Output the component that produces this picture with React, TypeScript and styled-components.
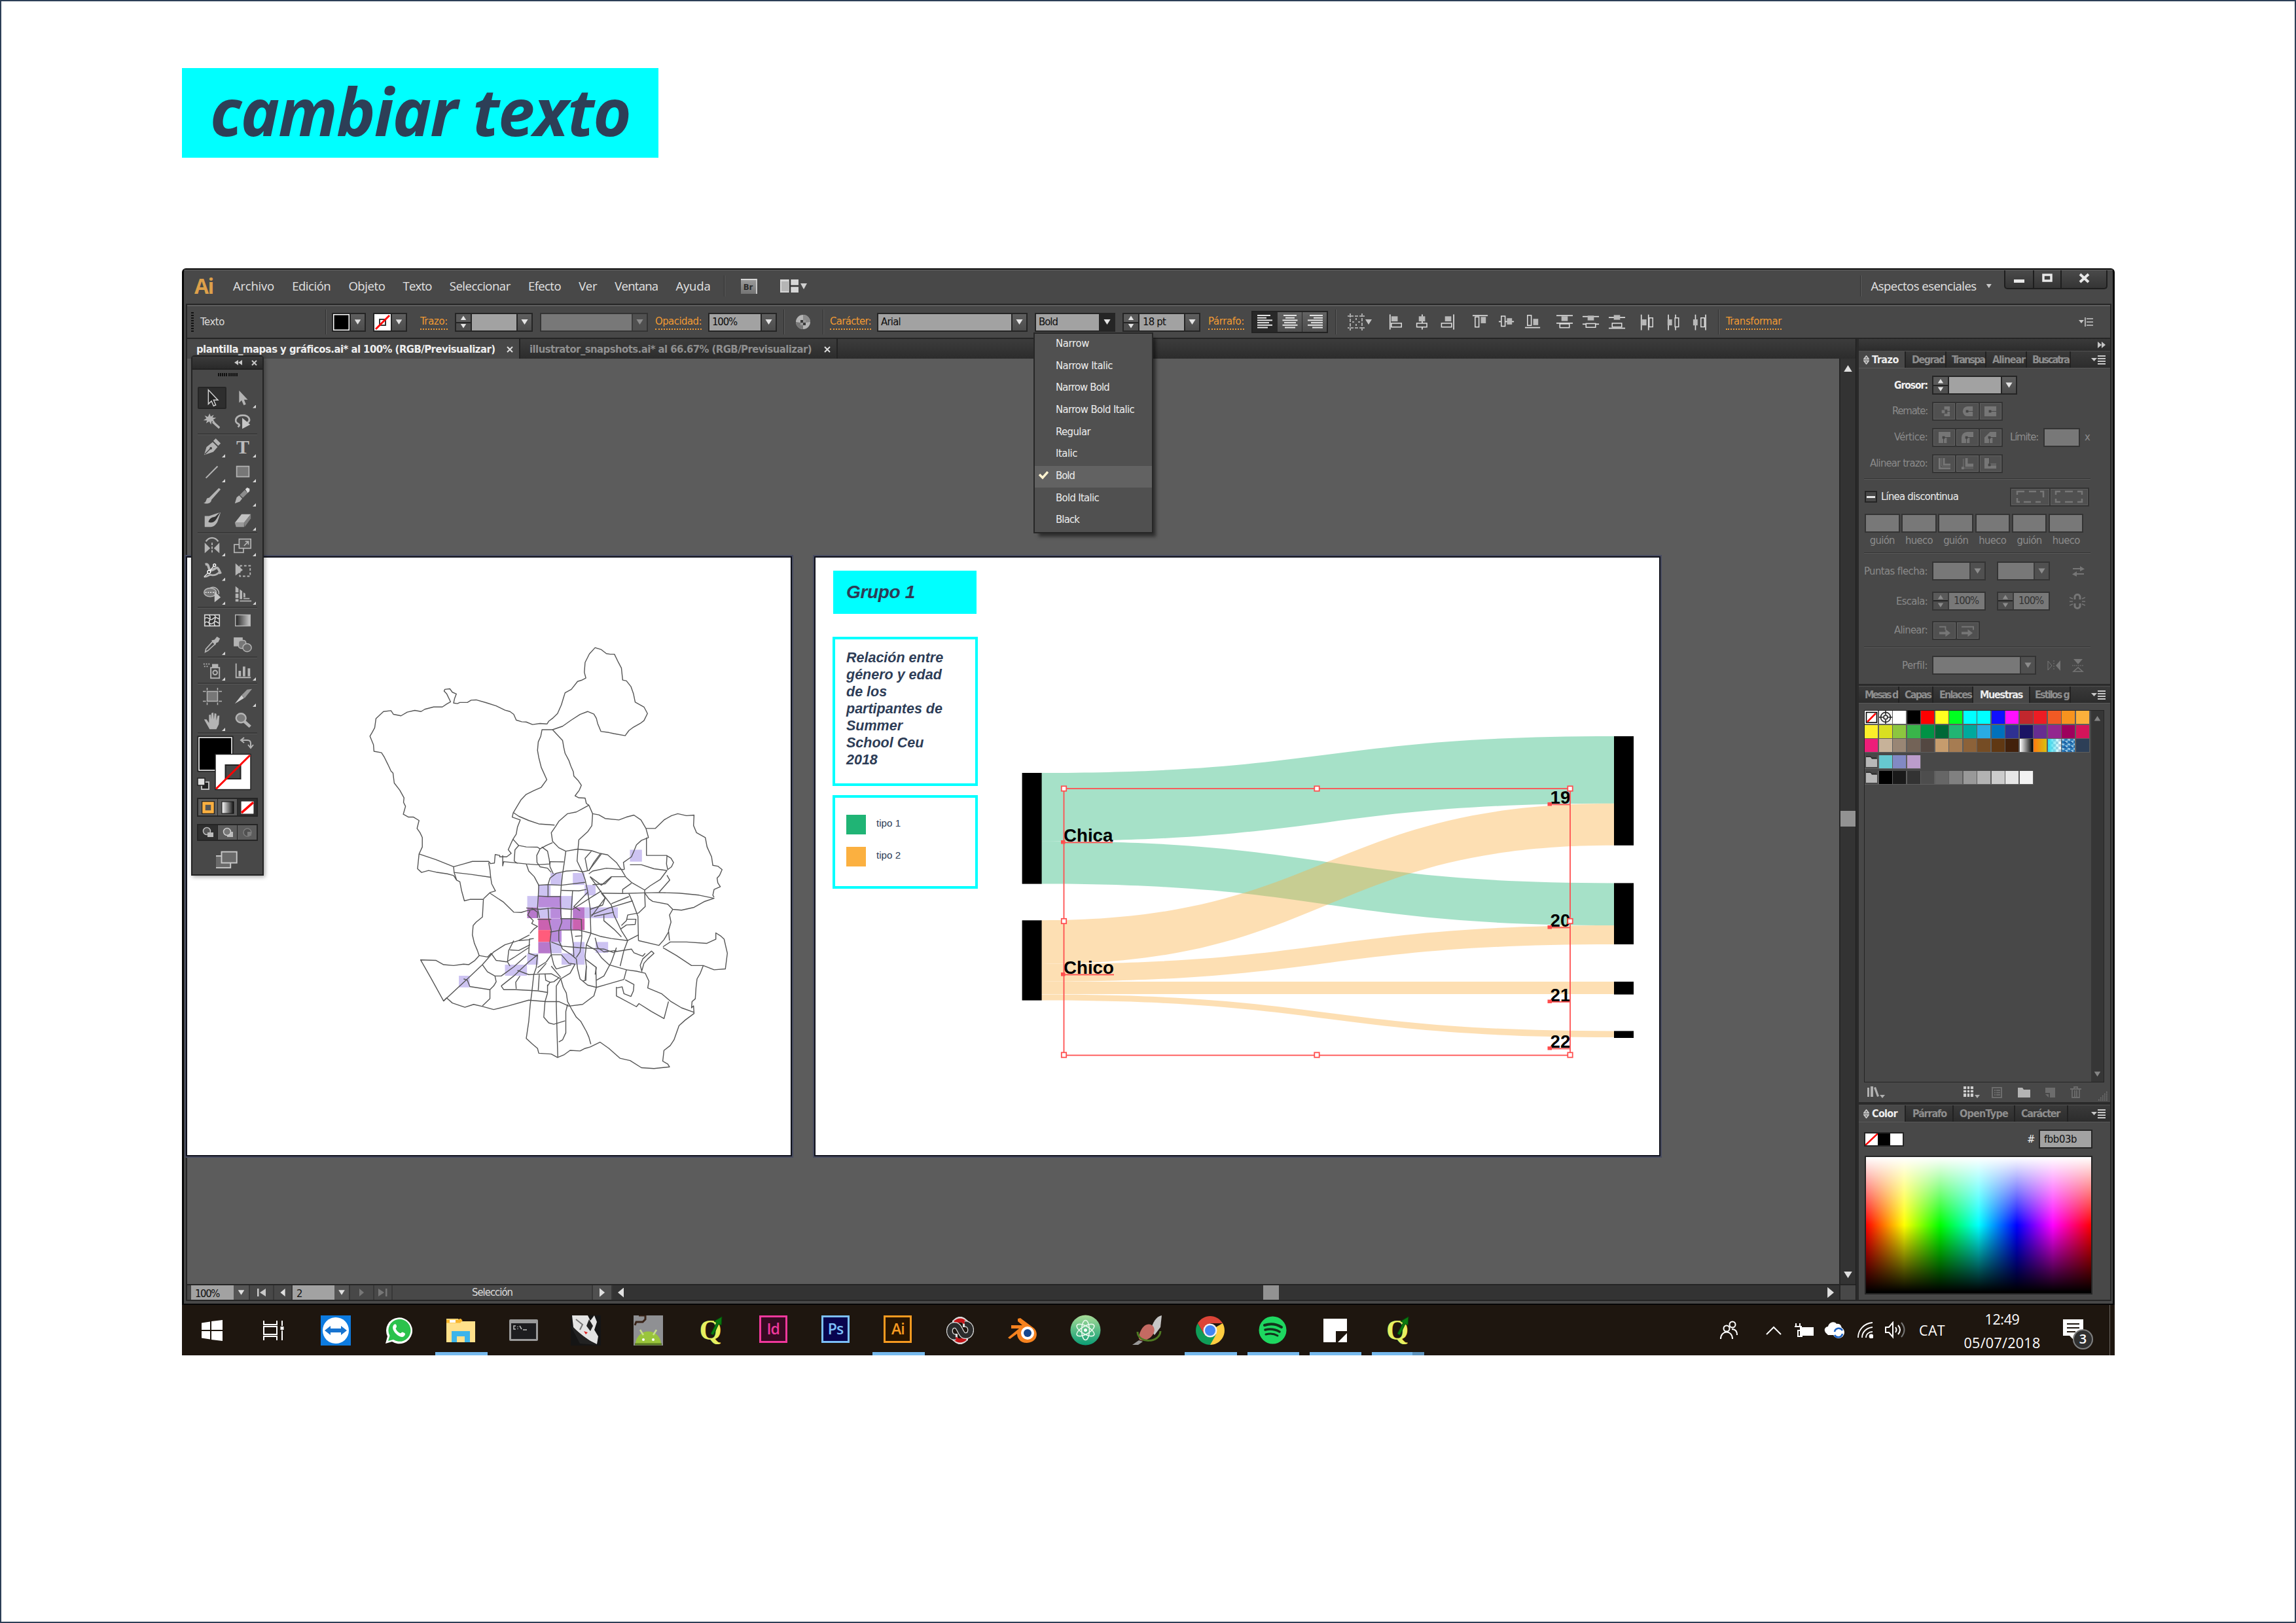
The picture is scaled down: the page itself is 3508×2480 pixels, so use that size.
import React, { useLayoutEffect, useRef, useState } from "react";
import styled, { createGlobalStyle, css } from "styled-components";

const TAHOMA = `"DejaVu Sans Condensed", "DejaVu Sans", sans-serif`;
const SEGOE = `"Open Sans", "Noto Sans", sans-serif`;
const ARIAL = `"Liberation Sans", Arial, sans-serif`;
const NAVY = "#2d3f57";
const CYAN = "#00ffff";
const PANEL = "#484848";
const EDGE = "#252525";
const ORANGE = "#f09a33";

const Global = createGlobalStyle`
  * { box-sizing: border-box; }
  body { margin: 0; background: #fff; }
  svg { display: block; flex: none; }
`;

/* ---------- text that spreads its letters over a given width ---------- */
const FitBox = styled.span<{ $w: number }>`
  display: inline-block;
  flex: none;
  width: ${(p) => p.$w}px;
  white-space: pre;
`;
const Fit = ({ w, children }: { w: number; children: string }) => {
  const ref = useRef<HTMLSpanElement>(null);
  const [spacing, setSpacing] = useState(0);
  useLayoutEffect(() => {
    if (ref.current) setSpacing((w - ref.current.getBoundingClientRect().width) / children.length);
  }, [w, children]);
  return (
    <FitBox $w={w}>
      <span ref={ref} style={{ letterSpacing: spacing }}>{children}</span>
    </FitBox>
  );
};

/* ---------- page ---------- */
const Page = styled.main`
  width: 3508px;
  height: 2480px;
  border: 2px solid ${NAVY};
  padding: 102px 276px;
  background: #fff;
  overflow: hidden;
`;
const Title = styled.h1`
  margin: 0 0 169px;
  width: 728px;
  height: 137px;
  padding-left: 43px;
  background: ${CYAN};
  color: ${NAVY};
  font: italic 700 100px/131px "Noto Sans", "Open Sans", sans-serif;
`;
const Desktop = styled.section`
  width: 2953px;
  height: 1661px;
  display: flex;
  flex-direction: column;
`;
const AppWindow = styled.div`
  height: 1584px;
  display: flex;
  flex-direction: column;
  border: solid #060606;
  border-width: 2px 3px 2px 3px;
  border-radius: 6px 6px 0 0;
  background: ${PANEL};
  color: #dcdcdc;
  font: 16.5px/20px ${TAHOMA};
`;

/* ---------- menu bar ---------- */
const MenuBar = styled.header`
  height: 52px;
  flex: none;
  display: flex;
  align-items: center;
  padding: 0 0 3px 16px;
  border-top: 1px solid #6c6c6c;
  font: 18.5px/24px ${SEGOE};
  color: #e2e2e2;
`;
const AiMark = styled.span`
  width: 59px;
  font: 700 32px/40px ${SEGOE};
  color: #dda04a;
  letter-spacing: -1.5px;
`;
const Menus = styled.nav`
  display: flex;
  gap: 27.2px;
`;
const Rule = styled.i<{ $h: number; $ml: number }>`
  flex: none;
  width: 2px;
  height: ${(p) => p.$h}px;
  margin-left: ${(p) => p.$ml}px;
  border-left: 1px solid #303030;
  border-right: 1px solid #5c5c5c;
`;
const BridgeBtn = styled.span`
  margin: 0 35px 0 24px;
  width: 25px;
  height: 23px;
  background: linear-gradient(#9a9a9a, #747474);
  border-top: 2px solid #d8d8d8;
  border-right: 2px solid #c8c8c8;
  font: 700 13px/21px ${TAHOMA};
  text-align: center;
  color: #2c2c2c;
`;
const Workspace = styled.div`
  margin-left: auto;
  display: flex;
  align-items: center;
  gap: 15px;
`;
const WinButtons = styled.div`
  align-self: flex-start;
  display: flex;
  width: 158px;
  height: 29px;
  margin: 0 8px 0 19px;
  background: linear-gradient(#4a4a4a, #353535);
  border: 2px solid #1e1e1e;
  border-top: 0;
  border-radius: 0 0 5px 5px;
`;
const WinButton = styled.span<{ $w: number }>`
  width: ${(p) => p.$w}px;
  display: flex;
  justify-content: center;
  padding-top: 3px;
  & + & { border-left: 2px solid #1e1e1e; }
`;

/* ---------- frame & control bar ---------- */
const Frame = styled.div`
  flex: 1;
  min-height: 0;
  margin: 0 2px 4px 3px;
  border: 2px solid ${EDGE};
  display: flex;
  flex-direction: column;
`;
const ControlBar = styled.div`
  position: relative;
  z-index: 3;
  height: 52px;
  flex: none;
  display: flex;
  align-items: center;
  border-top: 2px solid #5e5e5e;
  border-bottom: 2px solid ${EDGE};
`;
const Slot = styled.div<{ $ml: number; $w: number }>`
  flex: none;
  position: relative;
  margin-left: ${(p) => p.$ml}px;
  width: ${(p) => p.$w}px;
  display: flex;
`;
const LinkLabel = styled.span`
  color: ${ORANGE};
  height: 23px;
  line-height: 20px;
  border-bottom: 2px dotted ${ORANGE};
`;
const BarGrip = styled.i`
  width: 4px;
  height: 31px;
  background: repeating-linear-gradient(#111 0 2px, ${PANEL} 2px 4px);
`;
const ComboBox = styled.div<{ $w: number; $off?: boolean }>`
  position: relative;
  flex: none;
  display: flex;
  width: ${(p) => p.$w}px;
  height: 29px;
  border: 2px solid ${(p) => (p.$off ? "#343434" : EDGE)};
  background: ${(p) => (p.$off ? "#787878" : "#a2a2a2")};
  color: ${(p) => (p.$off ? "#333" : "#0c0c0c")};
`;
const ComboValue = styled.span<{ $pad?: number }>`
  flex: 1;
  padding-left: ${(p) => p.$pad ?? 4}px;
  line-height: 24px;
  white-space: nowrap;
`;
const ComboArrow = styled.span<{ $dark?: boolean; $off?: boolean }>`
  width: 23px;
  display: flex;
  align-items: center;
  justify-content: center;
  border-left: 2px solid ${(p) => (p.$off ? "#3c3c3c" : EDGE)};
  background: ${(p) => (p.$dark ? "#252525" : p.$off ? "#505050" : "linear-gradient(#5e5e5e,#4c4c4c)")};
`;
const StepBox = styled.span<{ $off?: boolean }>`
  width: 24px;
  display: flex;
  flex-direction: column;
  align-items: center;
  justify-content: space-around;
  border-right: 2px solid ${(p) => (p.$off ? "#3c3c3c" : EDGE)};
  background: linear-gradient(#5a5a5a 11.5px, ${EDGE} 11.5px 13.5px, #4e4e4e 13.5px);
`;
const Tri = styled.i<{ $dir?: "up" | "down" | "left" | "right"; $s?: number; $c?: string }>`
  flex: none;
  width: ${(p) => (p.$dir === "left" || p.$dir === "right" ? 0.9 : 1.2) * (p.$s ?? 8)}px;
  height: ${(p) => (p.$dir === "left" || p.$dir === "right" ? 1.5 : 0.95) * (p.$s ?? 8)}px;
  background: ${(p) => p.$c ?? "#e0e0e0"};
  clip-path: ${(p) =>
    ({
      up: "polygon(50% 0,100% 100%,0 100%)",
      down: "polygon(0 0,100% 0,50% 100%)",
      left: "polygon(100% 0,100% 100%,0 50%)",
      right: "polygon(0 0,100% 50%,0 100%)",
    })[p.$dir ?? "down"]};
`;

type ComboProps = { w: number; value?: string; tw?: number; step?: boolean; arrow?: boolean; dark?: boolean; off?: boolean; pad?: number; children?: React.ReactNode };
const Combo = ({ w, value, tw = 0, step, arrow = true, dark, off, pad, children }: ComboProps) => {
  const tint = off ? "#8c8c8c" : "#e4e4e4";
  return (
    <ComboBox $w={w} $off={off}>
      {step && (
        <StepBox $off={off}>
          <Tri $dir="up" $s={7} $c={tint} />
          <Tri $s={7} $c={tint} />
        </StepBox>
      )}
      <ComboValue $pad={pad}>{value && <Fit w={tw}>{value}</Fit>}</ComboValue>
      {arrow && (
        <ComboArrow $dark={dark} $off={off}>
          <Tri $s={8.5} $c={tint} />
        </ComboArrow>
      )}
      {children}
    </ComboBox>
  );
};

const DropMenu = styled.ul`
  position: absolute;
  left: -4px;
  top: 28px;
  width: 183px;
  margin: 0;
  padding: 0;
  list-style: none;
  background: #505050;
  border: 2px solid #272727;
  box-shadow: 6px 7px 5px -2px rgba(0, 0, 0, 0.5);
  color: #ededed;
`;
const DropItem = styled.li<{ $on?: boolean }>`
  height: 33.7px;
  display: flex;
  align-items: center;
  padding: 0 0 3px ${(p) => (p.$on ? 6 : 32)}px;
  gap: 11px;
  background: ${(p) => (p.$on ? "#626262" : "transparent")};
`;
const STYLES: [string, number][] = [
  ["Narrow", 51], ["Narrow Italic", 87], ["Narrow Bold", 82], ["Narrow Bold Italic", 120], ["Regular", 53],
  ["Italic", 33], ["Bold", 29], ["Bold Italic", 66], ["Black", 36],
];

const ParaGroup = styled.div`
  display: flex;
  width: 117px;
  height: 34px;
  border: 2px solid #222;
`;
const ParaButton = styled.span<{ $on?: boolean }>`
  flex: 1;
  display: flex;
  align-items: center;
  justify-content: center;
  background: ${(p) => (p.$on ? "#282828" : "linear-gradient(#636363,#4d4d4d)")};
  & + & { border-left: 1px solid #2a2a2a; }
`;
const ParaLines = ({ at }: { at: number }) => (
  <svg width="24" height="24" viewBox="0 0 24 24">
    {[20, 14, 23, 18, 23, 16].map((w, i) => (
      <rect key={i} x={(24 - w) * at} y={1 + i * 3.7} width={w} height="2" fill="#e4e4e4" />
    ))}
  </svg>
);

/* alignment & distribution glyphs: two bars against one or two guide lines */
const AlignGlyph = ({ kind, pos }: { kind: "h" | "v" | "dh" | "dv"; pos: 0 | 1 | 2 }) => {
  const solid = "#b8b8b8";
  const line = "#dcdcdc";
  const off = pos / 2;
  const body =
    kind === "h" || kind === "v" ? (
      <>
        <rect x={1 + 19 * off} y="0" width="1.8" height="24" fill={line} />
        <rect x={4 + 4 * off - (pos === 2 ? 1 : 0)} y="3" width="10" height="8" fill={solid} />
        <rect x={4 - 2.5 * off} y="14" width="16" height="6" fill={PANEL} stroke={line} strokeWidth="1.6" />
      </>
    ) : (
      <>
        <rect x="0" y={1 + off * 3} width="26" height="1.8" fill={line} />
        <rect x="8" y={3 - off * 2} width="10" height="7.5" fill={solid} />
        <rect x="0" y={13 + off * 3 + (pos === 2 ? 5 : 0)} width="26" height="1.8" fill={line} />
        <rect x="5.5" y={15 - off} width="15" height="6" fill={PANEL} stroke={line} strokeWidth="1.6" />
      </>
    );
  return (
    <svg width={27} height="26" viewBox="-1 -1 28 26">
      {kind === "v" ? <g transform="matrix(0 1 1 0 0 0)"><g transform="translate(0 24) scale(1 -1)">{body}</g></g>
        : kind === "dh" ? <g transform="translate(0 25) rotate(-90) scale(.95)">{body}</g> : body}
    </svg>
  );
};

/* ---------- document area ---------- */
const Main = styled.div`
  flex: 1;
  min-height: 0;
  display: flex;
  background: #2a2a2a;
`;
const DocColumn = styled.div`
  width: 2550px;
  flex: none;
  display: flex;
  flex-direction: column;
  border-right: 1px solid #1d1d1d;
`;
const TabBar = styled.div`
  height: 30px;
  flex: none;
  display: flex;
  background: linear-gradient(#3c3c3c, #2c2c2c);
`;
const DocTab = styled.div<{ $w: number; $on?: boolean }>`
  width: ${(p) => p.$w}px;
  display: flex;
  align-items: center;
  justify-content: space-between;
  padding: 1px 9px 0 14px;
  font-weight: 700;
  background: ${(p) => (p.$on ? PANEL : "transparent")};
  color: ${(p) => (p.$on ? "#eee" : "#8f8f8f")};
  border-right: 2px solid #232323;
`;
const Middle = styled.div`
  flex: 1;
  min-height: 0;
  display: flex;
`;
const Canvas = styled.div`
  position: relative;
  flex: 1;
  background: #5c5c5c;
`;
const Artboard = styled.div<{ $x: number; $w: number }>`
  position: absolute;
  left: ${(p) => p.$x}px;
  top: 302px;
  width: ${(p) => p.$w}px;
  height: 917px;
  background: #fff;
  border: 2px solid #10121c;
  outline: 2px solid #484c60;
`;
const VScroll = styled.div`
  position: relative;
  width: 25px;
  display: flex;
  flex-direction: column;
  align-items: center;
  justify-content: space-between;
  padding: 10px 0 9px;
  background: #333;
  border-left: 2px solid #262626;
`;
const VThumb = styled.i`
  width: 23px;
  height: 24px;
  margin-top: -10px;
  background: #929292;
`;

const Legend = styled.aside`
  position: absolute;
  left: 26px;
  top: 20px;
  width: 222px;
  color: #2d3c56;
  font-family: ${ARIAL};
`;
const GroupTag = styled.div`
  width: 219px;
  height: 66px;
  margin-left: 1px;
  padding-left: 20px;
  background: ${CYAN};
  font: italic 700 28px/65px ${ARIAL};
`;
const Outlined = styled.div<{ $h: number; $mt: number; $pt: number }>`
  height: ${(p) => p.$h}px;
  margin-top: ${(p) => p.$mt}px;
  padding: ${(p) => p.$pt}px 0 0 17px;
  border: 4px solid ${CYAN};
  font: italic 700 21.5px/26px ${ARIAL};
`;
const KeyRow = styled.div`
  display: flex;
  align-items: center;
  gap: 16px;
  height: 30px;
  margin-bottom: 19px;
  font: 15.2px/20px ${ARIAL};
  span { margin-top: -4px; }
`;
const KeyChip = styled.i<{ $c: string }>`
  width: 30px;
  height: 30px;
  background: ${(p) => p.$c};
`;
const Diagram = styled.svg`
  position: absolute;
  left: 296px;
  top: 250px;
`;

const ribbon = (a: number, b: number, c: number, d: number) =>
  `M1591 ${a}C2028 ${a} 2028 ${c} 2466 ${c}V${d}C2028 ${d} 2028 ${b} 1591 ${b}Z`;
const GREEN_FLOWS = [ribbon(1180, 1284.2, 1124, 1226.7), ribbon(1284.2, 1349.6, 1348.4, 1413)];
const ORANGE_FLOWS = [
  ribbon(1405.3, 1472, 1226.7, 1290.8), ribbon(1472, 1498.9, 1413, 1442),
  ribbon(1499, 1518, 1499, 1518), ribbon(1518.5, 1527.6, 1574.4, 1584),
];
const NODES = [
  [1561.6, 1180, 169.6], [1561.6, 1405.3, 122.3], [2466, 1124, 166.8],
  [2466, 1348.4, 93.6], [2466, 1499, 19.6], [2466, 1574.4, 10.6],
];
const LABELS: [string, number, number, number][] = [
  ["Chica", 1625, 1285, 75], ["Chico", 1625, 1487, 77], ["19", 2368.5, 1227, 30],
  ["20", 2368.5, 1415, 30], ["21", 2368.5, 1528.5, 30], ["22", 2368.5, 1600, 30],
];

const Sankey = () => (
  <Diagram width="960" height="520" viewBox="1542 1101 960 520">
    {GREEN_FLOWS.map((d) => <path key={d} d={d} fill="#20b475" fillOpacity=".4" />)}
    {ORANGE_FLOWS.map((d) => <path key={d} d={d} fill="#fbb040" fillOpacity=".4" />)}
    {NODES.map(([x, y, h]) => <rect key={x + "-" + y} x={x} y={y} width="30" height={h} fill="#000" />)}
    {LABELS.map(([t, x, y, w]) => (
      <g key={t}>
        <text x={x} y={y} fontFamily={ARIAL} fontWeight="700" fontSize="27.7" fill="#000">{t}</text>
        <rect x={x} y={y + 0.5} width={w} height="1.8" fill="#ff4d4d" />
        <rect x={x - 4} y={y - 2} width="6.5" height="5.5" fill="#ff4d4d" />
      </g>
    ))}
    <g stroke="#ff5050" strokeWidth="1.8" fill="none">
      <rect x="1625.5" y="1204" width="773.5" height="407.5" />
      {[[1625.5, 1204], [2012, 1204], [2399, 1204], [1625.5, 1406.5], [2399, 1406.5], [1625.5, 1611], [2012, 1611], [2399, 1611]].map(([x, y]) => (
        <rect key={x + "-" + y} x={x - 3.7} y={y - 3.7} width="7.4" height="7.4" fill="#fff" />
      ))}
    </g>
  </Diagram>
);

/* ---------- district map ---------- */
const MapSvg = styled.svg`
  position: absolute;
  left: 254px;
  top: 423px;
`;
const LILAC = "#cdc3f2", PURPLE = "#b98bdb", PINK = "#ca62b0";
const HEAT: [number, number, number, number, string][] = [
  [1104, 755, 48, 42, LILAC], [787, 837, 44, 42, LILAC], [876, 837, 47, 42, LILAC], [738, 879, 49, 39, LILAC],
  [923, 879, 44, 37, LILAC], [694, 918, 44, 40, LILAC], [738, 918, 93, 40, PURPLE], [831, 918, 45, 44, LILAC],
  [694, 958, 44, 38, "#b778cb"], [738, 958, 49, 38, LILAC], [787, 958, 44, 38, PURPLE], [876, 958, 47, 39, "#b778cb"],
  [923, 958, 133, 38, LILAC], [738, 997, 49, 41, PINK], [787, 997, 89, 41, PURPLE], [876, 997, 47, 41, PINK],
  [738, 1038, 49, 42, "#ff5c7c"], [787, 1038, 44, 42, PURPLE], [738, 1080, 49, 40, "#b778cb"], [787, 1080, 44, 40, LILAC],
  [876, 1080, 47, 80, LILAC], [831, 1120, 45, 40, LILAC], [967, 1080, 50, 38, LILAC], [694, 1120, 44, 40, LILAC],
  [605, 1160, 88, 39, LILAC], [421, 1199, 43, 41, LILAC],
];
const BORDERS = [
  "773,312 745,310 715,314 690,305 672,304 650,298 640,278 625,268 605,263 570,248 530,237 490,227 470,228 455,236 425,236 415,240 400,238 404,222 411,206 395,200 385,188 365,190 362,196 372,205 388,234 372,242 355,252 320,252 285,260 270,268 245,264 215,270 190,283 160,278 150,265 120,268 90,293 85,325 76,340 66,355 80,385 82,408 112,413 124,430 138,455 150,478 158,485 163,520 185,545 202,572 200,588 208,602 199,630 220,640 240,640 262,652 254,680 266,695 275,712 275,745 262,770 256,822 272,835 300,828 330,834 375,840 400,846 412,862",
  "262,770 330,790 400,815 440,805 475,796 540,796 548,804 563,802 566,772 584,775 584,780 612,780 630,768 618,755 628,735 637,718 650,700 655,675 666,650 634,640 638,625 655,600 670,578 690,560 720,547 750,535 772,508 750,465 740,430 735,405 738,375 748,355 753,332 795,332 835,320 870,298 905,278 935,268 960,277 970,292 975,310 988,338 1020,342 1040,346 1085,353 1100,335 1115,325 1145,310 1160,300 1174,275 1160,252 1125,235 1118,205 1108,180 1090,160 1075,157 1070,115 1058,95 1042,66 1025,66 1010,64 990,50 965,43 942,65 925,95 922,130 928,150 910,158 895,162 870,190 845,202 838,222 830,245 815,275 795,292 780,302 773,312",
  "795,332 835,370 840,395 845,415 860,440 868,460 878,480 880,495 898,512 910,528 902,545 885,565 900,572 925,573 930,592 940,598 955,628 952,670 935,692 900,720 895,770 893,795 915,835 925,860 935,900 945,960 948,1050 930,1090 925,1130 930,1165 925,1215",
  "940,598 915,610 890,622 855,628 820,655 808,672 790,695 795,725 820,748 848,760 842,800 835,840 830,880 826,930 828,980 832,1010",
  "640,625 660,637 700,652 740,664 803,668", "637,718 660,740 690,745 735,746 745,752 770,740 795,730",
  "660,740 645,755 642,795 655,803", "745,752 732,775 733,800 745,815 775,820 790,835", "752,745 775,760 782,790 785,815 798,840",
  "955,628 980,632 1005,645 1060,650 1090,640 1120,633 1148,650 1168,680 1178,712 1150,722 1130,738 1120,760 1110,780 1078,800 1082,825",
  "1168,680 1205,680 1240,650 1270,635 1295,628 1330,635 1360,633 1358,670 1370,695 1405,712 1412,745 1430,780 1435,810 1455,813 1472,825 1462,845 1452,855 1455,872 1465,885 1440,895 1435,915 1440,922",
  "1170,712 1170,775 1250,775 1268,785 1278,800 1270,815 1255,825 1250,805 1252,775",
  "1104,808 1150,808 1200,822 1252,828 1225,860 1185,882 1163,897", "1252,845 1263,862 1240,885 1220,905",
  "848,760 895,753 950,758 985,768 1015,773 1050,800 1072,828 1088,852 1110,870 1163,897 1163,907 1180,928 1195,937 1255,947 1275,965 1310,968 1360,958 1400,938 1440,926 1380,915 1300,908 1220,906 1160,907 1075,909 990,908",
  "400,815 402,835 470,842 548,852 545,825 540,800", "402,835 412,862 425,868 432,900 443,935 465,930 519,930 515,992 490,1010 478,1022 475,1055 483,1085 495,1110 502,1128 485,1145 460,1160 440,1158 400,1163 360,1160 330,1145 268,1143 310,1208 360,1288 455,1210 515,1160 560,1115 605,1090 660,1075 703,1055",
  "548,852 552,875 567,900 545,906 519,928", "545,908 600,940 640,975 670,976 692,970 720,965",
  "596,775 596,812 600,797 690,805 735,808 785,805 785,797 840,798", "690,805 700,830 722,850 740,880 738,920",
  "502,1128 536,1133 550,1120 570,1145 612,1150 640,1135 700,1100", "360,1288 372,1277 395,1295 445,1310 480,1300 515,1307 560,1318 620,1305 700,1285 770,1290 820,1290 860,1306 915,1300 960,1270 970,1240 968,1170",
  "515,1160 535,1185 565,1200 570,1220 560,1235 545,1248 545,1280 515,1305", "440,1210 455,1215 465,1237 545,1248",
  "565,1200 590,1200 640,1168 690,1128", "590,1235 640,1200 700,1150 735,1125", "655,1180 700,1195 745,1193 790,1192 828,1210",
  "590,1235 600,1248 650,1248 735,1252 775,1258", "650,1245 648,1222 665,1200", "735,1125 730,1170 720,1195 712,1260 706,1300 700,1360 690,1420 715,1440 735,1455 740,1472 790,1475 815,1487 840,1478 865,1462 905,1464 925,1455 945,1450 985,1433 1020,1455 1065,1490 1105,1498 1150,1523 1200,1526 1262,1520 1255,1510 1235,1500 1240,1462 1265,1445 1280,1425 1300,1375 1325,1355 1360,1332 1358,1305 1350,1312 1352,1290 1365,1280 1368,1240 1372,1210 1385,1190 1397,1163",
  "828,1210 810,1235 810,1300 813,1400 816,1487", "828,1210 838,1240 850,1260 855,1290 870,1315 890,1345 908,1360 930,1395 940,1415 948,1440",
  "775,1230 775,1260 765,1290 760,1345 780,1365 800,1370 845,1358", "855,1300 848,1325 848,1400 835,1425 820,1432", "742,1195 738,1250",
  "765,1192 768,1215 785,1222 800,1220 822,1205", "785,1222 775,1235", "1236,1097 1265,1080 1330,1080 1410,1085 1447,1070 1447,1048 1465,1058 1480,1070 1493,1120 1485,1175 1440,1178 1397,1163 1350,1163 1290,1128 1236,1100",
  "1275,965 1262,985 1268,1010 1258,1040 1262,1075", "1138,1075 1136,990 1115,940 1100,910", "1138,1075 1220,1092 1240,1072 1258,1045",
  "1163,907 1165,955 1138,978 1095,985 1090,1005 1070,1022", "1066,1035 1090,1020 1125,1018 1128,1000 1090,1000",
  "1050,1238 1050,1270 1130,1308 1140,1297 1190,1325 1240,1350 1258,1290", "1052,1242 1073,1238 1080,1262 1108,1272 1118,1252 1120,1230 1085,1213",
  "970,1240 1010,1230 1080,1212 1090,1178 1130,1183 1165,1190 1180,1218 1175,1242 1230,1262 1268,1290 1310,1312 1360,1328",
  "1152,1185 1145,1162 1155,1140 1190,1112 1200,1120 1175,1140 1160,1155 1152,1180",
  "737,880 777,878 777,920 738,918 735,960 743,995", "777,878 785,855 810,838 850,830 890,828 915,833 940,828 965,800 990,770", "775,920 826,920", "777,960 780,1000 790,1040 785,1080 790,1125",
  "690,960 745,965 795,960 826,962 875,965", "777,878 830,880 925,870", "830,898 900,900 930,895", "875,900 870,965 868,1030 878,1090 880,1130", "826,998 880,998 910,1000 912,1060 905,1115 890,1135",
  "832,1010 820,1040 820,1075 835,1105 870,1125 890,1140 895,1175 905,1210 935,1232 970,1240", "735,1000 790,1000", "785,1045 830,1038 900,1038 945,1048 985,1060 1030,1068 1095,1075 1138,1055",
  "885,1060 912,1058", "720,1068 703,1070 700,1120 735,1130", "705,1050 720,1035 735,1025 712,1015 718,1005 696,985 705,970", "712,960 735,975 735,995",
  "640,1075 620,1110 615,1150 625,1165", "660,1075 705,1072", "625,1108 660,1110 705,1090", "790,1125 830,1125 860,1155 885,1158 865,1190 828,1210", "790,1125 770,1150 735,1170", "790,1125 800,1160 810,1175 870,1160", "735,1190 770,1155", "790,1165 828,1205",
  "790,1080 835,1095 900,1100 960,1103 1000,1105 1040,1118", "930,1090 970,1110 990,1135 1020,1160 1090,1178", "1095,1075 1080,1110 1065,1165", "1095,1075 1070,1040 1040,985 1030,950 990,905 945,850", "1050,1100 1030,1150 1000,1200 970,1215", "925,1140 970,1170 965,1195", "930,1165 928,1215 915,1218",
  "1040,1115 1110,1105 1120,1118 1155,1130 1165,1120", "875,965 945,925 990,900", "945,850 990,880 1030,850 1085,850", "940,840 955,830 1010,820 1080,825", "955,878 1005,875 1030,852", "1110,873 1075,895 1075,908", "950,990 1005,925 990,908", "945,965 995,950 1005,925", "950,985 1020,960 1115,935", "960,990 1000,983 1040,975", "1000,985 1000,1005 1040,1035 1070,1062", "1030,945 1100,920", "985,770 960,800 940,830", "950,760 925,785 935,830", "965,1065 975,1100 1000,1115 1050,1110", "905,970 880,955 935,905",
];
const DistrictMap = () => (
  <MapSvg width="600" height="680" viewBox="0 0 1568 1568" preserveAspectRatio="none">
    {HEAT.map(([x, y, w, h, c]) => <rect key={x + "-" + y} x={x} y={y} width={w} height={h} fill={c} />)}
    <g fill="none" stroke="#555" strokeWidth="1.4" strokeLinejoin="round">
      {BORDERS.map((pts) => <polyline key={pts} points={pts} vectorEffect="non-scaling-stroke" />)}
    </g>
  </MapSvg>
);

/* ---------- tools palette ---------- */
const Palette = styled.div`
  position: absolute;
  z-index: 2;
  left: 6px;
  top: -5px;
  width: 111px;
  height: 795px;
  border: 2px solid #232323;
  border-radius: 5px 5px 0 0;
  background: ${PANEL};
  box-shadow: 2px 2px 6px rgba(0, 0, 0, 0.35);
  display: flex;
  flex-direction: column;
  align-items: center;
`;
const PaletteHead = styled.div`
  width: 100%;
  height: 20px;
  flex: none;
  display: flex;
  justify-content: flex-end;
  align-items: center;
  gap: 14px;
  padding-right: 8px;
  background: linear-gradient(#3a3a3a, #2a2a2a);
  border-bottom: 2px solid #222;
`;
const PaletteGrip = styled.i`
  flex: none;
  width: 30px;
  height: 5px;
  margin: 5px 0 14px;
  background: repeating-linear-gradient(90deg, #111 0 2px, ${PANEL} 2px 3.1px);
`;
const ToolRow = styled.div<{ $h: number; $line?: boolean }>`
  flex: none;
  width: 91px;
  height: ${(p) => p.$h}px;
  display: flex;
  justify-content: space-between;
  align-items: center;
  ${(p) => p.$line && css`border-bottom: 2px solid #3a3a3a; box-shadow: 0 1px 0 #565656;`}
`;
const Tool = styled.span<{ $on?: boolean; $more?: boolean }>`
  position: relative;
  width: 44px;
  height: 34px;
  display: flex;
  align-items: center;
  justify-content: center;
  border-radius: 2px;
  ${(p) => p.$on && css`background: #2e2e2e; border: 2px solid #252525;`}
  ${(p) => p.$more && css`&::after {
    content: ""; position: absolute; right: 2px; bottom: 1px;
    width: 5px; height: 5px; background: #d8d8d8;
    clip-path: polygon(100% 0, 100% 100%, 0 100%);
  }`}
`;
const G = "#b4b4b4";
const GLYPHS: Record<string, React.ReactNode> = {
  select: <path d="M10 3v23l5-5 3.5 8 3.5-1.500-3.500-8h7z" fill="#222" stroke="#d2d2d2" strokeWidth="1.600" />,
  direct: <path d="M10 4v20l4-4 3.500 8 3.500-1.500-3-7.500h6z" fill={G} />,
  wand: <g fill={G}><path d="M12 3l1.800 5 5-3-2 4.500 6 .5-5 3 3 4-5.500-1.500-1 5.500-3-5-5 3 1.500-4.500-6-.5 5-3-3-4.500 5.500 2z" /><path d="M18 15l11 10-2 3-11-10z" /></g>,
  lasso: <g fill="none" stroke={G} strokeWidth="3"><path d="M8 25c4-3 2-5-1-6-5-3-3-13 9-13 11 0 14 9 6 13" /><path d="M15 10v18l13-7z" fill="#c6c6c6" stroke="none" /></g>,
  pen: <g><path d="M3 29l4-13 10-8 8 8-7 8z" fill={G} /><path d="M4 28l9-9" stroke="#444" strokeWidth="1.500" /><circle cx="14" cy="18" r="2" fill="#444" /><path d="M18 6l4-4 8 8-4 4z" fill={G} /></g>,
  line: <path d="M6 26L25 7" stroke={G} strokeWidth="2.200" />,
  rect: <rect x="6" y="7" width="20" height="17" fill="#777" stroke={G} strokeWidth="1.800" />,
  brush: <path d="M2 27c6 0 3-9 9-8L27 3l3 2-15 17c0 6-9 8-13 5z" fill={G} />,
  pencil: <g fill={G}><path d="M3 28l3-10 4-3 5 5-4 5z" /><path d="M11 14l8-8 5 5-8 8z" fill="#8c8c8c" /><path d="M20 5l3-3 4 2v4l-3 3z" fill="#ddd" /></g>,
  blob: <g><path d="M4 9h7L23 5l7-2-4 12c-2 8-8 12-12 12H4z" fill={G} /><path d="M10 19c2-8 8-8 11-9l9-8-7 12c-3 5-8 7-13 5z" fill="#333" /></g>,
  eraser: <g><path d="M3 20L14 6h15L18 20z" fill="#c2c2c2" /><path d="M3 20h15v7H5z" fill="#9a9a9a" /><path d="M18 20L29 6v7L19 27z" fill="#808080" /></g>,
  reflect: <g fill={G}><path d="M4 11v17l9-8zM28 11v17l-9-8z" /><path d="M15 11h2v4h-2zM15 17h2v4h-2zM15 23h2v4h-2z" /><path d="M6 9c5-8 15-8 20 0" fill="none" stroke={G} strokeWidth="2.500" /></g>,
  scale: <g fill="none" stroke={G} strokeWidth="1.800"><rect x="2" y="14" width="15" height="13" /><rect x="10" y="5" width="19" height="15" fill="#555" /><path d="M18 16l7-7M20 9h5v5" /></g>,
  warp: <g fill="none" stroke={G} strokeWidth="4"><path d="M5 6c8-3 3 12 11 9s8-9 14 6" /><path d="M3 26c8 0 6-4 12-3s9-1 14-5" strokeWidth="3" /><path d="M3 26l8-8 9-11" stroke="#eee" strokeWidth="1.500" /><circle cx="11" cy="18" r="2.500" fill="#333" stroke="#fff" strokeWidth="1.500" /><circle cx="20" cy="7" r="2" fill="#333" stroke="#fff" strokeWidth="1.500" /></g>,
  free: <g><path d="M4 4v20l12-9z" fill={G} /><rect x="11" y="8" width="17" height="17" fill="none" stroke={G} strokeWidth="2" strokeDasharray="4 3" /></g>,
  shape: <g><ellipse cx="13" cy="13" rx="10" ry="7" fill="#777" stroke={G} strokeWidth="1.800" /><path d="M13 6c8-4 15 3 14 10" fill="none" stroke={G} strokeWidth="1.800" /><path d="M5 13h14" stroke="#eee" strokeDasharray="2 2" strokeWidth="1.500" /><path d="M20 11v18l10-8z" fill="#c4c4c4" /></g>,
  persp: <g fill={G}><path d="M4 3l5 4v6H4zM4 15h5v7H4zM11 8l4 3v13h-4zM17 13l3 2v6h-3z" /><path d="M4 24h5v4H4zM11 26h19v2H11zM17 22h10v2H17z" /></g>,
  mesh: <g fill="none" stroke="#d6d6d6" strokeWidth="1.800"><rect x="4" y="7" width="24" height="18" fill="#333" /><path d="M4 13c6-6 8 6 14 0s6 2 10 0M4 20c6-6 8 6 14 0s6 2 10 0M11 7c6 6-4 10 2 18M20 7c5 6-4 12 1 18" /></g>,
  grad: <rect x="4" y="7" width="24" height="18" fill="url(#toolGrad)" stroke={G} strokeWidth="1.600" />,
  drop: <g><path d="M5 28l1-5L17 11l4 4L9 26z" fill="none" stroke={G} strokeWidth="1.800" /><path d="M15 9l5-1 4-5 5 3-3 6-3 1-2 4z" fill={G} /></g>,
  blend: <g stroke={G} strokeWidth="1.600"><rect x="2" y="5" width="13" height="13" fill={G} /><rect x="9" y="9" width="12" height="13" rx="4" fill="#777" /><ellipse cx="23" cy="21" rx="7" ry="6.500" fill="#666" /></g>,
  spray: <g fill="none" stroke={G} strokeWidth="2"><rect x="14" y="12" width="14" height="17" /><rect x="17" y="7" width="8" height="4" fill={G} /><circle cx="21" cy="20" r="3.500" /><path d="M2 6h10M3 10h8" strokeDasharray="2 2" /></g>,
  graph: <g fill={G}><path d="M4 5h2v22h23v2H4z" /><path d="M9 17h4v9H9zM16 10h4v16h-4zM24 13h4v13h-4z" /></g>,
  board: <g stroke={G} strokeWidth="1.600" fill="none"><rect x="8" y="8" width="17" height="16" fill="#777" /><path d="M1 8h5M27 8h5M1 24h5M27 24h5M8 2v4M25 2v4M8 26v4M25 26v4" /></g>,
  slice: <g><path d="M3 28L14 14l4 5z" fill="#d0d0d0" /><path d="M14 14l9-9 8-1-12 15z" fill="#999" /></g>,
  hand: <path d="M3 14l4 0 4 6V7l3-1 1 8V4l3-1 1 11 1-10 3 1v11l2-8h3l-1 14-4 8H12z" fill={G} />,
  zoom: <g><ellipse cx="13" cy="12" rx="8" ry="7.500" fill="#7c7c7c" stroke={G} strokeWidth="2.500" /><path d="M18 17l10 9" stroke={G} strokeWidth="5" /></g>,
};
const TypeGlyph = styled.span`
  font: 700 30px/30px "Liberation Serif", serif;
  color: #bcbcbc;
`;
const Glyph = ({ name }: { name: string }) =>
  name === "type" ? <TypeGlyph>T</TypeGlyph> : (
    <svg width="30" height="30" viewBox="0 0 32 32">
      <defs><linearGradient id="toolGrad"><stop offset="0" stopColor="#222" /><stop offset="1" stopColor="#ccc" /></linearGradient></defs>
      {GLYPHS[name]}
    </svg>
  );
const TOOLS: [string, string, number, boolean, boolean, boolean][] = [
  ["select", "direct", 37, false, false, true], ["wand", "lasso", 37.500, true, false, false],
  ["pen", "type", 39, false, true, true], ["line", "rect", 37, false, true, true], ["brush", "pencil", 37, false, false, true],
  ["blob", "eraser", 38.500, true, false, true], ["reflect", "scale", 38, false, true, true], ["warp", "free", 37, false, true, false],
  ["shape", "persp", 38.500, true, true, true], ["mesh", "grad", 38, false, false, false], ["drop", "blend", 38.500, true, true, false],
  ["spray", "graph", 40, true, true, true], ["board", "slice", 38, false, false, true], ["hand", "zoom", 38, true, true, false],
];
const PaletteButtons = styled.div<{ $mt: number; $h: number }>`
  flex: none;
  display: flex;
  width: 93px;
  height: ${(p) => p.$h}px;
  margin-top: ${(p) => p.$mt}px;
  border: 2px solid #252525;
`;
const PaletteButton = styled.span<{ $on?: boolean }>`
  flex: 1;
  display: flex;
  align-items: center;
  justify-content: center;
  background: ${(p) => (p.$on ? "#2f2f2f" : "#5c5c5c")};
  & + & { border-left: 1px solid #252525; }
`;
const ScreenMode = styled.svg`
  margin-top: 5px;
`;

const ToolsPalette = () => (
  <Palette>
    <PaletteHead>
      <svg width="12" height="8" viewBox="0 0 12 8" fill="#c8c8c8"><path d="M6 0v8L0 4zM12 0v8L6 4z" /></svg>
      <svg width="9" height="9" viewBox="0 0 9 9" stroke="#c8c8c8" strokeWidth="2"><path d="M1 1l7 7M8 1L1 8" /></svg>
    </PaletteHead>
    <PaletteGrip />
    {TOOLS.map(([a, b, h, line, m1, m2], i) => (
      <ToolRow key={a} $h={h} $line={line}>
        <Tool $on={i === 0} $more={m1}><Glyph name={a} /></Tool>
        <Tool $more={m2}><Glyph name={b} /></Tool>
      </ToolRow>
    ))}
    <svg width="95" height="90" viewBox="0 0 95 90">
      <rect x="3" y="5" width="52" height="52" fill="#000" stroke="#222" strokeWidth="3" />
      <rect x="4" y="6" width="50" height="50" fill="#000" stroke="#fff" strokeWidth="1.500" />
      <rect x="29" y="31.500" width="54" height="54" fill="#fff" stroke="#222" strokeWidth="1.500" />
      <rect x="44.500" y="48" width="23" height="21" fill="#484848" stroke="#222" strokeWidth="2" />
      <path d="M30 84.500L82 33" stroke="#ff0000" strokeWidth="3" />
      <path d="M70 10h8q5 0 5 5v5M73 6l-5 4 5 4M79 17l4 5 4-5" fill="none" stroke="#b5b5b5" strokeWidth="2" />
      <rect x="8" y="74" width="11" height="11" fill="#222" stroke="#bbb" strokeWidth="2" />
      <rect x="2" y="68" width="11" height="11" fill="#ddd" stroke="#222" strokeWidth="1.500" />
    </svg>
    <PaletteButtons $mt={8} $h={29}>
      <PaletteButton><svg width="20" height="20"><rect width="20" height="20" fill="#222" /><rect x="3.500" y="3.500" width="13" height="13" fill="#555" stroke="#fbb040" strokeWidth="4.500" /></svg></PaletteButton>
      <PaletteButton>
        <svg width="20" height="20">
          <defs><linearGradient id="bw"><stop offset="0" stopColor="#fff" /><stop offset="1" stopColor="#111" /></linearGradient></defs>
          <rect x="1" y="1" width="18" height="18" fill="url(#bw)" stroke="#111" />
        </svg>
      </PaletteButton>
      <PaletteButton $on><svg width="20" height="20"><rect width="20" height="20" fill="#fff" stroke="#111" /><path d="M1 18L19 2" stroke="#f00" strokeWidth="3.500" /></svg></PaletteButton>
    </PaletteButtons>
    <PaletteButtons $mt={11} $h={26}>
      <PaletteButton $on><svg width="18" height="18"><circle cx="7" cy="7" r="5.500" fill="#555" stroke="#bbb" strokeWidth="1.500" /><rect x="8" y="9" width="9" height="7" fill="#bbb" /></svg></PaletteButton>
      <PaletteButton><svg width="18" height="18"><rect x="8" y="8" width="9" height="8" fill="#bbb" /><circle cx="8" cy="8" r="5.500" fill="#777" stroke="#ccc" strokeWidth="1.500" /></svg></PaletteButton>
      <PaletteButton><svg width="18" height="18"><circle cx="9" cy="9" r="6" fill="#505050" stroke="#7c7c7c" strokeWidth="1.500" /><rect x="9" y="8" width="6" height="6" fill="#7c7c7c" /></svg></PaletteButton>
    </PaletteButtons>
    <ScreenMode width="36" height="38" viewBox="2 -8 34 36" stroke="#c8c8c8" strokeWidth="1.800" fill="#6a6a6a">
      <rect x="1" y="9" width="22" height="17" /><rect x="10" y="3" width="22" height="16" />
    </ScreenMode>
  </Palette>
);

/* ---------- status bar ---------- */
const StatusBar = styled.div`
  height: 24px;
  flex: none;
  display: flex;
  align-items: stretch;
  background: ${PANEL};
  border-top: 2px solid ${EDGE};
`;
const StatusField = styled.span<{ $w: number; $ml?: number }>`
  width: ${(p) => p.$w}px;
  margin-left: ${(p) => p.$ml ?? 0}px;
  padding-left: 6px;
  background: #a2a2a2;
  color: #111;
  line-height: 25px;
`;
const StatusCell = styled.span<{ $w: number; $bg?: string }>`
  width: ${(p) => p.$w}px;
  display: flex;
  align-items: center;
  justify-content: center;
  background: ${(p) => p.$bg ?? "transparent"};
  border-right: 2px solid #383838;
`;
const HTrack = styled.div`
  flex: 1;
  display: flex;
  align-items: center;
  justify-content: space-between;
  padding: 0 8px;
  background: #333;
`;
const HThumb = styled.i`
  width: 24px;
  height: 22px;
  margin-left: 138px;
  background: #929292;
`;
const Corner = styled.i`
  width: 25px;
  background: ${PANEL};
  border-left: 2px solid #262626;
`;

/* ---------- right dock ---------- */
const Dock = styled.aside`
  width: 384px;
  margin-left: auto;
  display: flex;
  flex-direction: column;
  color: #8c8c8c;
`;
const DockHead = styled.div`
  height: 18px;
  flex: none;
  display: flex;
  justify-content: flex-end;
  align-items: center;
  padding-right: 7px;
  background: linear-gradient(#3a3a3a, #2c2c2c);
`;
const DockTabs = styled.div`
  height: 26px;
  flex: none;
  display: flex;
  background: linear-gradient(#3a3a3a, #2c2c2c);
  border-top: 1px solid #505050;
  font-size: 16px;
`;
const DockTab = styled.span<{ $w: number; $pad: number; $on?: boolean }>`
  width: ${(p) => p.$w}px;
  padding-left: ${(p) => p.$pad}px;
  display: flex;
  align-items: center;
  gap: 4px;
  white-space: nowrap;
  font-weight: 700;
  color: ${(p) => (p.$on ? "#ededed" : "#8d8d8d")};
  background: ${(p) => (p.$on ? PANEL : "transparent")};
  border-right: 2px solid #222;
`;
const PanelBody = styled.div<{ $h: number; $gap: number }>`
  height: ${(p) => p.$h}px;
  flex: none;
  margin-bottom: ${(p) => p.$gap}px;
  background: ${PANEL};
  border-top: 1px solid #5a5a5a;
`;
const MenuMark = styled.svg`
  margin: 0 7px 0 auto;
  align-self: center;
`;
const PanelMenu = () => (
  <MenuMark width="22" height="14" viewBox="0 0 22 14">
    <path d="M0 4h9l-4.500 5z" fill="#c8c8c8" /><path d="M10 1h12M10 5h12M10 9h12M10 13h12" stroke="#c8c8c8" strokeWidth="1.800" />
  </MenuMark>
);
const Updown = () => (
  <svg width="9" height="14" viewBox="0 0 9 14" fill="none" stroke="#c8c8c8" strokeWidth="1.800"><path d="M1 5.500L4.500 1 8 5.500zM1 8.500L4.500 13 8 8.500z" /></svg>
);
const Tabs = ({ items }: { items: [string, number, number, number, boolean?, boolean?][] }) => (
  <DockTabs>
    {items.map(([t, w, pad, tw, on, ud]) => (
      <DockTab key={t} $w={w} $pad={pad} $on={on}>{ud && <Updown />}<Fit w={tw}>{t}</Fit></DockTab>
    ))}
    <PanelMenu />
  </DockTabs>
);
const Row = styled.div<{ $h: number }>`
  height: ${(p) => p.$h}px;
  display: flex;
  align-items: center;
`;
const RowLabel = styled.span<{ $lit?: boolean }>`
  width: 105px;
  margin-right: 7px;
  display: flex;
  justify-content: flex-end;
  color: ${(p) => (p.$lit ? "#f0f0f0" : "#8a8a8a")};
  font-weight: ${(p) => (p.$lit ? 700 : 400)};
  font-size: ${(p) => (p.$lit ? 15.5 : 16.5)}px;
`;
const Divider = styled.i<{ $mt?: number }>`
  display: block;
  width: 346px;
  height: 2px;
  margin: ${(p) => p.$mt ?? 0}px 0 0 8px;
  background: linear-gradient(#343434 50%, #5a5a5a 50%);
`;
const Seg = styled.div<{ $w: number }>`
  display: flex;
  width: ${(p) => p.$w}px;
  height: 29px;
  border: 2px solid #343434;
`;
const SegBtn = styled.span`
  flex: 1;
  display: flex;
  align-items: center;
  justify-content: center;
  background: #505050;
  box-shadow: inset 0 0 0 1px #606060;
  & + & { border-left: 2px solid #343434; }
`;
const Check = styled.span`
  width: 19px;
  height: 18px;
  margin: 0 6px 0 9px;
  border: 2px solid ${EDGE};
  display: flex;
  align-items: center;
  justify-content: center;
  &::before { content: ""; width: 13px; height: 3px; background: #e6e6e6; }
`;
const Bright = styled.span<{ $w: number }>`
  width: ${(p) => p.$w}px;
  color: #ededed;
`;
const DashGrid = styled.div`
  display: grid;
  grid-template-columns: repeat(6, 53.500px);
  column-gap: 2.700px;
  padding-left: 9px;
`;
const DashField = styled.i`
  height: 29px;
  background: #787878;
  border: 2px solid #343434;
`;
const DashName = styled.span`
  text-align: center;
  height: 30px;
  line-height: 23px;
`;
const Space = styled.i<{ $w: number }>`
  flex: none;
  width: ${(p) => p.$w}px;
`;
const StrokeRows = styled.div`
  padding-top: 6px;
`;

const K = "#767676";
const SEG: Record<string, React.ReactNode> = {
  cap0: <><path d="M10 3h9v16h-9v-4h5V8h-5z" fill={K} /><path d="M8 11h12" stroke="#4a4a4a" /><rect x="6" y="9" width="5" height="5" fill={K} /></>,
  cap1: <><path d="M19 3h-8a8 8 0 000 16h8z" fill={K} /><path d="M9 11h11" stroke="#444" /><rect x="8" y="9" width="4" height="4" fill="#444" /></>,
  cap2: <><path d="M1 3h19v16H1z" fill={K} /><path d="M9 11h11" stroke="#444" /><rect x="8" y="9" width="4" height="4" fill="#444" /></>,
  j0: <><path d="M1 2h19v9h-6v9H1z" fill={K} /><path d="M9 20v-9h11" stroke="#444" fill="none" /><rect x="7" y="9" width="4" height="4" fill="#444" /></>,
  j1: <><path d="M1 20v-9a9 9 0 019-9h10v9h-6v9z" fill={K} /><path d="M9 20v-9h11" stroke="#444" fill="none" /><rect x="7" y="9" width="4" height="4" fill="#444" /></>,
  j2: <><path d="M1 20v-9l9-9h10v9h-6v9z" fill={K} /><path d="M9 20v-9h11" stroke="#444" fill="none" /><rect x="7" y="9" width="4" height="4" fill="#444" /></>,
  a0: <><path d="M1 2h3v18H1zM1 17h19v3H1zM8 2h3v9h9v3H8z" fill={K} /><path d="M6 2v13h14" stroke={K} fill="none" /></>,
  a1: <><path d="M7 2h4v9h9v5H7z" fill={K} /><path d="M4 3v15h16" stroke={K} fill="none" /><rect x="1" y="16" width="4" height="4" fill={K} /></>,
  a2: <><path d="M1 2h8v9h11v8H1z" fill={K} /><path d="M9 2v11h11" stroke="#444" fill="none" /><rect x="7" y="11" width="4" height="4" fill="#444" /></>,
  e0: <><path d="M2 5h10v5" stroke={K} fill="none" strokeWidth="2" /><path d="M2 13h10V9l8 6-8 6v-4H2z" fill={K} /></>,
  e1: <><path d="M1 5h19v5" stroke={K} fill="none" strokeWidth="2" /><path d="M1 13h10V9l8 6-8 6v-4H1z" fill={K} /></>,
};
const SegGroup = ({ w, ids }: { w: number; ids: string[] }) => (
  <Seg $w={w}>{ids.map((id) => <SegBtn key={id}><svg width="20" height="21" viewBox="0 0 21 22">{SEG[id]}</svg></SegBtn>)}</Seg>
);

const SwatchWell = styled.div`
  width: 367px;
  height: 569px;
  margin: 10px 0 0 8px;
  display: flex;
  border: 1px solid ${EDGE};
`;
const SwatchArea = styled.div`
  width: 347px;
`;
const SwatchGroup = styled.div<{ $n: number; $mb: number }>`
  display: grid;
  grid-template-columns: repeat(${(p) => p.$n}, 20px);
  gap: 1.500px;
  width: max-content;
  padding: 0 1px 1px 0;
  margin-bottom: ${(p) => p.$mb}px;
  background: #5e5e5e;
`;
const Swatch = styled.span<{ $c: string }>`
  width: 20px;
  height: 20px;
  background: ${(p) => p.$c};
`;
const WellScroll = styled.div`
  width: 19px;
  display: flex;
  flex-direction: column;
  justify-content: space-between;
  align-items: center;
  padding: 8px 0;
  background: #363636;
`;
const SWATCHES = [
  "none", "reg", "#fff", "#000", "#ff0000", "#ffff20", "#00ff20", "#00ffff", "#00ffff", "#1010ff", "#ff10ff", "#c1272d", "#ed1c24", "#f15a24", "#f7931e", "#fbb03b",
  "#fcee2a", "#d9e021", "#8cc63f", "#39b54a", "#009245", "#006837", "#22b573", "#00a99d", "#29abe2", "#0071bc", "#2e3192", "#1b1464", "#662d91", "#93278f", "#9e005d", "#d4145a",
  "#ed1e79", "#c7b299", "#998675", "#736357", "#534741", "#c69c6d", "#a67c52", "#8c6239", "#754c24", "#603813", "#42210b",
  "linear-gradient(90deg,#fff,#000)", "linear-gradient(90deg,#ff7a10,#d8c010)",
  "linear-gradient(90deg,#30dcf0,rgba(48,220,240,0)),repeating-conic-gradient(#fff 0 25%,#bcd 0 50%) 0 0/8px 8px",
  "repeating-conic-gradient(#2a7ab8 0 20%,#8fc0e0 0 35%,#1f5fa0 0 60%) 0 0/9px 7px", NAVY,
];
const GRAYS = ["#000", "#1a1a1a", "#333", "#4d4d4d", "#666", "#808080", "#999", "#b3b3b3", "#ccc", "#e6e6e6", "#f2f2f2"];
const Folder = () => (
  <svg width="20" height="20"><rect width="20" height="20" fill={PANEL} /><path d="M2 3h7l2 3h8v12H2z" fill="#b8b8b8" /><path d="M2 2h7l1.500 2H18" stroke="#1c1c1c" fill="none" /></svg>
);
const NoneSwatch = () => (
  <svg width="20" height="20"><rect width="20" height="20" fill="#fff" /><rect x="2.500" y="2.500" width="16" height="15.500" fill="none" stroke="#000" strokeWidth="1.600" /><path d="M4 17L17 4" stroke="#f00" strokeWidth="2.500" /></svg>
);
const RegSwatch = () => (
  <svg width="20" height="20"><rect width="20" height="20" fill="#f4f4f4" /><g fill="none" stroke="#222" strokeWidth="1.600"><circle cx="10" cy="10" r="7.500" /><circle cx="10" cy="10" r="3" /><path d="M10 0v6M10 14v6M0 10h6M14 10h6" /></g></svg>
);
const ColorRow = styled.div`
  height: 51px;
  display: flex;
  align-items: center;
  padding-left: 8px;
`;
const Trio = styled.span`
  display: flex;
  width: 61px;
  height: 22px;
  border: 2px solid ${EDGE};
`;
const TrioCell = styled.i<{ $c: string }>`
  flex: 1;
  background: ${(p) => p.$c};
`;
const HexField = styled.span`
  width: 82px;
  height: 29px;
  margin-left: 7px;
  padding-left: 6px;
  border: 2px solid ${EDGE};
  background: #a2a2a2;
  color: #101010;
  line-height: 25px;
`;
const Spectrum = styled.div`
  width: 348px;
  height: 212px;
  margin-left: 9px;
  border: 2px solid ${EDGE};
  background:
    linear-gradient(#fff, rgba(255, 255, 255, 0) 50%, rgba(0, 0, 0, 0) 50%, #000 99%),
    linear-gradient(90deg, #f00, #ff0 17%, #0f0 33%, #0ff 50%, #00f 67%, #f0f 83%, #f00);
`;
const Grip = styled.svg`
  align-self: flex-end;
`;

const RightDock = () => (
  <Dock>
    <DockHead><svg width="12" height="10" viewBox="0 0 12 10" fill="#c4c4c4"><path d="M0 0v10l6-5zM6 0v10l6-5z" /></svg></DockHead>
    <Tabs items={[["Trazo", 72, 7, 41, true, true], ["Degrad", 62, 9, 50], ["Transpa", 61, 8, 50], ["Alinear", 62, 9, 50], ["Buscatra", 67, 8, 56]]} />
    <PanelBody $h={483} $gap={3}>
      <StrokeRows>
        <Row $h={39}><RowLabel $lit><Fit w={51}>Grosor:</Fit></RowLabel><Combo w={130} step /></Row>
        <Row $h={40}><RowLabel><Fit w={54}>Remate:</Fit></RowLabel><SegGroup w={108} ids={["cap0", "cap1", "cap2"]} /></Row>
        <Row $h={40}>
          <RowLabel><Fit w={51}>Vértice:</Fit></RowLabel><SegGroup w={108} ids={["j0", "j1", "j2"]} />
          <Space $w={11} /><Fit w={43}>Límite:</Fit><Space $w={8} /><Combo w={56} off arrow={false} /><Space $w={7} />x
        </Row>
        <Row $h={40}><RowLabel><Fit w={88}>Alinear trazo:</Fit></RowLabel><SegGroup w={108} ids={["a0", "a1", "a2"]} /></Row>
        <Divider $mt={3} />
        <Row $h={52}>
          <Check /><Bright $w={197}><Fit w={118}>Línea discontinua</Fit></Bright>
          <Seg $w={121}>
            <SegBtn><svg width="44" height="20" fill="none" stroke={K} strokeWidth="2.500"><path d="M2 7V2h11M20 2h11M37 2h5v9M2 12v6h4M12 18h11M30 18h8" /></svg></SegBtn>
            <SegBtn><svg width="44" height="20" fill="none" stroke={K} strokeWidth="2.500"><path d="M2 7V2h7M16 2h12M35 2h7v5M2 13v5h7M16 18h12M35 18h7v-5" /></svg></SegBtn>
          </Seg>
        </Row>
        <DashGrid>
          {[0, 1, 2, 3, 4, 5].map((i) => <DashField key={i} />)}
          {[0, 1, 2, 3, 4, 5].map((i) => <DashName key={i}>{i % 2 ? <Fit w={42}>hueco</Fit> : <Fit w={38}>guión</Fit>}</DashName>)}
        </DashGrid>
        <Divider />
        <Row $h={53}>
          <RowLabel><Fit w={97}>Puntas flecha:</Fit></RowLabel><Combo w={82} off /><Space $w={17} /><Combo w={81} off /><Space $w={33} />
          <svg width="21" height="20" fill={K}><path d="M2 5h11V2l7 4.500L13 10V7H2zM19 13H8v-3l-7 4.500L8 18v-3h11z" /></svg>
        </Row>
        <Row $h={39}>
          <RowLabel><Fit w={48}>Escala:</Fit></RowLabel><Combo w={82} off step arrow={false} value="100%" tw={38} pad={7} /><Space $w={17} />
          <Combo w={81} off step arrow={false} value="100%" tw={38} pad={7} /><Space $w={30} />
          <svg width="24" height="24" fill="none" stroke={K} strokeWidth="2"><path d="M8 9V5a4 3.500 0 018 0v4M8 15v4a4 3.500 0 008 0v-4" strokeWidth="3" /><path d="M0 6l5 2M0 12h5M0 18l5-2M24 6l-5 2M24 12h-5M24 18l-5-2" strokeWidth="1.500" /></svg>
        </Row>
        <Row $h={50}><RowLabel><Fit w={51}>Alinear:</Fit></RowLabel><SegGroup w={73} ids={["e0", "e1"]} /></Row>
        <Divider />
        <Row $h={53}>
          <RowLabel><Fit w={39}>Perfil:</Fit></RowLabel><Combo w={159} off /><Space $w={17} />
          <svg width="20" height="16" fill={K}><path d="M1 1v14l6-7z" fill="none" stroke={K} /><path d="M20 0v16l-7-8z" /><path d="M10 0v16" stroke={K} strokeDasharray="2 2" /></svg>
          <Space $w={18} />
          <svg width="18" height="20" fill={K}><path d="M2 0h14L9 8z" /><path d="M0 10h18" stroke={K} strokeDasharray="2 1" /><path d="M2 19h14l-7-6z" fill="none" stroke={K} strokeWidth="1.500" /></svg>
        </Row>
      </StrokeRows>
    </PanelBody>
    <Tabs items={[["Mesas d", 62, 9, 50], ["Capas", 52, 8, 40], ["Enlaces", 61, 9, 49], ["Muestras", 87, 10, 65, true], ["Estilos g", 62, 7, 52]]} />
    <PanelBody $h={610} $gap={4}>
      <SwatchWell>
        <SwatchArea>
          <SwatchGroup $n={16} $mb={4}>
            {SWATCHES.map((c, i) => (c === "none" ? <NoneSwatch key={i} /> : c === "reg" ? <RegSwatch key={i} /> : <Swatch key={i} $c={c} />))}
          </SwatchGroup>
          <SwatchGroup $n={4} $mb={3}><Folder /><Swatch $c="#66c8d0" /><Swatch $c="#8289c4" /><Swatch $c="#bb9ccb" /></SwatchGroup>
          <SwatchGroup $n={12} $mb={0}><Folder />{GRAYS.map((c) => <Swatch key={c} $c={c} />)}</SwatchGroup>
        </SwatchArea>
        <WellScroll><Tri $dir="up" $c="#858585" /><Tri $c="#858585" /></WellScroll>
      </SwatchWell>
      <Row $h={30}>
        <Space $w={13} />
        <svg width="27" height="18" fill="#b0b0b0"><path d="M0 2h3v14H0zM5 0h4v16H5zM10 2l3-1 5 14-3 1zM19 13h8l-4 5z" /></svg>
        <Space $w={120} />
        <svg width="25" height="18"><rect width="15" height="16" fill="#cfcfcf" /><path d="M5 0v16M10 0v16M0 5h15M0 10h15" stroke="#333" strokeWidth="1.500" /><path d="M17 13h8l-4 5z" fill="#b0b0b0" /></svg>
        <Space $w={18} />
        <svg width="16" height="17" fill="none" stroke="#6c6c6c" strokeWidth="2"><rect x="1" y="1" width="14" height="15" /><path d="M4 5h2M7 5h6M4 8.500h2M7 8.500h6M4 12h2M7 12h6" /></svg>
        <Space $w={24} />
        <svg width="19" height="17" fill="#b4b4b4"><path d="M0 1h7l2 3h10v12H0z" /></svg>
        <Space $w={23} />
        <svg width="15" height="17" fill="#6c6c6c"><path d="M0 1h15v15H7V9H0z" /><path d="M0 11h5v5z" /></svg>
        <Space $w={23} />
        <svg width="17" height="18" fill="none" stroke="#6c6c6c" strokeWidth="1.800"><path d="M0 4h17M6 3V1h5v2M3 5v12h11V5M7 6v10M10 6v10" /></svg>
        <Space $w={26} />
        <Grip width="15" height="16" fill="#7a7a7a">
          {[0, 1, 2, 3, 4].map((r) => Array.from({ length: r + 1 }, (_, c) => <rect key={r + "-" + c} x={12 - c * 3} y={r * 3} width="1.600" height="1.600" />))}
        </Grip>
      </Row>
    </PanelBody>
    <Tabs items={[["Color", 72, 7, 39, true, true], ["Párrafo", 73, 10, 52], ["OpenType", 94, 9, 74], ["Carácter", 81, 9, 59]]} />
    <PanelBody $h={272} $gap={0}>
      <ColorRow>
        <Trio>
          <svg width="19" height="18"><rect width="19" height="18" fill="#fff" /><path d="M0 18L19 0" stroke="#f00" strokeWidth="2.500" /></svg>
          <TrioCell $c="#000" /><TrioCell $c="#fff" />
        </Trio>
        <Space $w={188} /><Bright $w={11}>#</Bright><HexField><Fit w={50}>fbb03b</Fit></HexField>
      </ColorRow>
      <Spectrum />
    </PanelBody>
  </Dock>
);

/* ---------- taskbar ---------- */
const Taskbar = styled.footer`
  flex: 1;
  display: flex;
  background: #1e160f;
  color: #fff;
  font-family: ${SEGOE};
`;
const TaskCell = styled.span<{ $w?: number; $open?: boolean; $stack?: boolean }>`
  flex: none;
  position: relative;
  width: ${(p) => p.$w ?? 95.400}px;
  display: flex;
  align-items: center;
  justify-content: center;
  padding-right: 2px;
  ${(p) => p.$open && css`&::after {
    content: ""; position: absolute; left: 8px; right: 8px; bottom: 0; height: 5px;
    background: ${p.$stack ? "linear-gradient(90deg,#76b9ed 78%,#5c92bd 78%)" : "#76b9ed"};
  }`}
`;
const AdobeTile = styled.span<{ $c: string; $bg: string }>`
  width: 43px;
  height: 42px;
  margin-top: -4px;
  border: 3px solid ${(p) => p.$c};
  background: ${(p) => p.$bg};
  color: ${(p) => p.$c};
  font: 600 23px/34px ${SEGOE};
  text-align: center;
  letter-spacing: -1px;
`;
const QMark = styled.span`
  position: relative;
  font: 700 44px/46px "Liberation Serif", serif;
  color: #e6f060;
  svg { position: absolute; left: 6px; top: 0; }
`;
const Qgis = () => (
  <QMark>Q<svg width="30" height="42"><path d="M28 2L16 9l4 2-9 17 4 2 8-17 4 2z" fill="#0a7a10" stroke="#054a08" /></svg></QMark>
);
const TrayText = styled.span`
  font-size: 21.500px;
  line-height: 36px;
  text-align: center;
`;
const Clock = styled(TrayText)`
  width: 118px;
  margin: 2px 34px 0 28px;
`;
const Tray = styled.div`
  margin-left: auto;
  display: flex;
  align-items: center;
`;
const Notice = styled.span`
  position: relative;
  width: 71px;
`;
const Badge = styled.span`
  position: absolute;
  left: 15px;
  top: 15px;
  width: 31px;
  height: 31px;
  border: 2px solid #808080;
  border-radius: 50%;
  background: #303030;
  font: 600 20px/26px ${SEGOE};
  text-align: center;
`;
const PeekLine = styled.i`
  align-self: stretch;
  width: 8px;
  border-left: 1px solid #6a6560;
`;

const Icons = {
  win: <svg width="32" height="32" viewBox="0 0 32 32" fill="#fff"><path d="M0 4.500l13-2V15H0zM15 2l17-2v15H15zM0 17h13v12.500l-13-2zM15 17h17v15l-17-2z" /></svg>,
  task: <svg width="32" height="30" viewBox="0 0 32 30" fill="none" stroke="#fff" strokeWidth="2"><path d="M1 0v6h20V0M1 30v-6h20v6M29 0v8M29 15v15" /><rect x="1" y="9" width="20" height="12" /><path d="M29 9v5" strokeWidth="5" /></svg>,
  tv: <svg width="46" height="46"><rect width="46" height="46" fill="#0d7be0" /><circle cx="23" cy="23" r="20" fill="#fff" /><path d="M6 23l9-7v4h16v-4l9 7-9 7v-4H15v4z" fill="#1874d0" /></svg>,
  wa: <svg width="42" height="42" viewBox="0 0 42 42"><path d="M1 41l3-11A20 20 0 1111 38z" fill="#fff" /><path d="M5 37l2.500-8A17 17 0 1113 35z" fill="#2bc24c" /><path d="M14 12c2-2 4 0 4 3 0 2-2 2-1 4 2 4 4 5 6 6 2 1 3-3 5-1 3 1 4 2 2 5-3 4-9 1-13-3s-7-10-3-14z" fill="#fff" /></svg>,
  files: <svg width="44" height="36"><path d="M0 3V0h18l3 4h23v32H0z" fill="#ffe08a" /><path d="M0 4h20l3-3" stroke="#f7b52c" strokeWidth="5" fill="none" /><rect x="5" y="2" width="9" height="4" fill="#fff" /><path d="M8 36V19h28v17h-8V27H16v9z" fill="#3cb4ea" /></svg>,
  cmd: <svg width="44" height="33"><rect width="44" height="33" rx="2" fill="#9a9a9a" /><rect x="3" y="6" width="38" height="24" fill="#1d1d1f" /><path d="M10 10H7v5h3M13 11v1M13 14v1M16 10l3 5M21 16h6" stroke="#bbb" strokeWidth="1.500" fill="none" /></svg>,
  rhino: <svg width="46" height="46"><rect width="46" height="46" fill="#151515" /><path d="M2 0h24l4 8 6-8 4 10-4 12 6 10-2 12-12-6-12-8L4 18z" fill="#e4e4e4" /><path d="M0 16l10 8 10 8 14 10 6 3-26-2zM28 6l6 10-4 8-6-8z" fill="#222" /><path d="M8 6l10 8-4 8" stroke="#777" fill="none" strokeWidth="2" /><path d="M20 24l6 2-3 3z" fill="#d22" /></svg>,
  droid: <svg width="45" height="46"><rect width="45" height="46" fill="#8f9093" /><path d="M8 0h10v6l-4 4H4l-2 5" stroke="#3a2418" strokeWidth="3" fill="none" /><path d="M3 44a19 19 0 0139 0z" fill="#9ac53c" /><path d="M10 22l5 8M35 22l-5 8" stroke="#c8e089" strokeWidth="2.500" /><path d="M2 44h41" stroke="#5a7a20" strokeWidth="3" /><circle cx="15" cy="37" r="2" fill="#fff" /><circle cx="30" cy="37" r="2" fill="#fff" /></svg>,
  knot: <svg width="42" height="42" fill="none"><path d="M13 16V8q8-8 16 0v8M13 26v8q8 8 16 0v-8" stroke="#ddd" strokeWidth="8" /><path d="M13 9q8-7 16 0M13 33q8 7 16 0" stroke="#c41418" strokeWidth="6" /><path d="M14 31C2 32 2 12 13 13c8 0 8 16 16 16 11 1 11-19-1-18" stroke="#ddd" strokeWidth="10" /><path d="M14 31C2 32 2 12 13 13c8 0 8 16 16 16 11 1 11-19-1-18" stroke="#2c2c2c" strokeWidth="7.500" /></svg>,
  blender: <svg width="46" height="40" viewBox="0 0 46 40"><path d="M0 31L17 17H5v-5h17L15 6V2l4-1 20 15c8 6 7 22-10 23-11 0-15-8-15-14L3 33z" fill="#f5821f" /><circle cx="30" cy="24" r="10" fill="#fff" /><circle cx="30" cy="24" r="6" fill="#15478f" /></svg>,
  atom: <svg width="47" height="47" viewBox="0 0 47 47"><defs><linearGradient id="at" x2="0" y2="1"><stop stopColor="#a8dc98" /><stop offset="1" stopColor="#0a9c74" /></linearGradient></defs><circle cx="23.500" cy="23.500" r="23" fill="url(#at)" /><g fill="none" stroke="#e8f8ec" strokeWidth="1.600"><ellipse cx="23.500" cy="23.500" rx="6" ry="15" /><ellipse cx="23.500" cy="23.500" rx="6" ry="15" transform="rotate(60 23.500 23.500)" /><ellipse cx="23.500" cy="23.500" rx="6" ry="15" transform="rotate(120 23.500 23.500)" /></g><circle cx="23.500" cy="23.500" r="2.500" fill="#fff" /></svg>,
  bird: <svg width="46" height="46"><path d="M28 22c4-12 8-20 17-22l-2 18-9 12z" fill="#c6c6c6" /><path d="M10 32c3-14 12-22 20-17 8 6 2 18-8 22-8 3-13 1-12-5z" fill="#c46a62" /><path d="M8 25c0 18 34 18 35-1" fill="none" stroke="#4f7a22" strokeWidth="3" /><path d="M0 45l10-7 6 2-7 5z" fill="#999" /></svg>,
  chrome: <svg width="44" height="44" viewBox="-22 -22 44 44"><path d="M0 0L19-11A22 22 0 010 22z" fill="#ffcd40" /><path d="M9 6L0 22A22 22 0 01-19-11L-9 6z" fill="#0f9d58" /><path d="M0-11H19A22 22 0 00-19-11L-9 6z" fill="#db4437" /><circle r="10.500" fill="#f1f1f1" /><circle r="8" fill="#4285f4" /></svg>,
  spotify: <svg width="43" height="43"><circle cx="21.500" cy="21.500" r="21" fill="#1ed760" /><g fill="none" stroke="#12331c" strokeLinecap="round"><path d="M9 14c9-3 18-2 26 3" strokeWidth="4" /><path d="M10 21c8-2 15-1 22 3" strokeWidth="3.500" /><path d="M11 28c7-2 13-1 18 2" strokeWidth="3" /></g></svg>,
  note: <svg width="36" height="36"><path d="M0 0h36v19H19v17H0z" fill="#fff" /><path d="M22 36l14-14v14z" fill="#fff" /></svg>,
};

const TaskbarView = () => (
  <Taskbar>
    <TaskCell $w={93}>{Icons.win}</TaskCell>
    <TaskCell $w={95.700}>{Icons.task}</TaskCell>
    <TaskCell>{Icons.tv}</TaskCell>
    <TaskCell>{Icons.wa}</TaskCell>
    <TaskCell $open>{Icons.files}</TaskCell>
    <TaskCell>{Icons.cmd}</TaskCell>
    <TaskCell>{Icons.rhino}</TaskCell>
    <TaskCell>{Icons.droid}</TaskCell>
    <TaskCell><Qgis /></TaskCell>
    <TaskCell><AdobeTile $c="#f0389c" $bg="#360a22">Id</AdobeTile></TaskCell>
    <TaskCell><AdobeTile $c="#7cc0fa" $bg="#08044e">Ps</AdobeTile></TaskCell>
    <TaskCell $open><AdobeTile $c="#f79a20" $bg="#281500">Ai</AdobeTile></TaskCell>
    <TaskCell>{Icons.knot}</TaskCell>
    <TaskCell>{Icons.blender}</TaskCell>
    <TaskCell>{Icons.atom}</TaskCell>
    <TaskCell>{Icons.bird}</TaskCell>
    <TaskCell $open>{Icons.chrome}</TaskCell>
    <TaskCell $open>{Icons.spotify}</TaskCell>
    <TaskCell $open>{Icons.note}</TaskCell>
    <TaskCell $open $stack><Qgis /></TaskCell>
    <Tray>
      <svg width="29" height="30" fill="none" stroke="#fff" strokeWidth="2"><circle cx="11" cy="12" r="4.500" /><path d="M2 28c0-14 18-14 18 0" /><circle cx="20" cy="6" r="4.500" /><path d="M19 13c6 0 8 4 8 9" /></svg>
      <Space $w={42} />
      <svg width="24" height="14" fill="none" stroke="#fff" strokeWidth="2"><path d="M1 13L12 2l11 11" /></svg>
      <Space $w={20} />
      <svg width="30" height="26"><rect x="9" y="9" width="19" height="11" fill="#fff" stroke="#fff" strokeWidth="2" /><path d="M2 2v5M8 2v5M0 7h10v6H5v9h7" stroke="#fff" strokeWidth="2" fill="none" /></svg>
      <Space $w={15} />
      <svg width="32" height="27"><path d="M2 17c-4-7 3-9 4-9 2-8 11-8 13-4 6-1 8 4 8 8l-6 9H6z" fill="#fff" /><circle cx="22" cy="17" r="9" fill="#fff" /><path d="M16 16a6.500 6.500 0 0112-2M28 19a6.500 6.500 0 01-12 2" fill="none" stroke="#1c62c4" strokeWidth="2.500" /></svg>
      <Space $w={19} />
      <svg width="24" height="25" fill="none" stroke="#fff" strokeWidth="1.800"><path d="M1 24C1 12 10 2 23 1M7 24c0-9 7-15 16-16M13 24c0-5 4-9 10-9" /><circle cx="21" cy="22" r="2.500" fill="#fff" /></svg>
      <Space $w={18} />
      <svg width="32" height="27" fill="none" stroke="#fff" strokeWidth="2"><path d="M1 9h5l6-7v22l-6-7H1z" /><path d="M16 9q3 4 0 8M20 6q6 7 0 14" /><path d="M25 2q9 11 0 22" stroke="#777" /></svg>
      <Space $w={20} />
      <TrayText><Fit w={40}>CAT</Fit></TrayText>
      <Clock><Fit w={53}>12:49</Fit><br /><Fit w={117}>05/07/2018</Fit></Clock>
      <Notice>
        <svg width="32" height="33"><path d="M0 0h31v25H18v8l-8-8H0z" fill="#fff" /><path d="M6 7h19M6 13h19M6 19h13" stroke="#1e160f" strokeWidth="1.800" /></svg>
        <Badge>3</Badge>
      </Notice>
      <PeekLine />
    </Tray>
  </Taskbar>
);

const MENUS: [string, number][] = [
  ["Archivo", 63], ["Edición", 59], ["Objeto", 56], ["Texto", 44], ["Seleccionar", 93], ["Efecto", 50], ["Ver", 28], ["Ventana", 66], ["Ayuda", 53],
];
const ALIGNS: ["h" | "v" | "dh" | "dv", 0 | 1 | 2, number][] = [
  ["h", 0, 24], ["h", 1, 13], ["h", 2, 12], ["v", 0, 22], ["v", 1, 13], ["v", 2, 13],
  ["dv", 0, 21], ["dv", 1, 13], ["dv", 2, 13], ["dh", 0, 21], ["dh", 1, 13], ["dh", 2, 13],
];
const ColorWell = styled.span`
  display: flex;
  width: 52px;
  height: 29px;
  border: 2px solid ${EDGE};
`;

export default function App() {
  return (
    <Page>
      <Global />
      <Title><Fit w={642}>cambiar texto</Fit></Title>
      <Desktop>
        <AppWindow>
          <MenuBar>
            <AiMark>Ai</AiMark>
            <Menus>{MENUS.map(([t, w]) => <Fit key={t} w={w}>{t}</Fit>)}</Menus>
            <Rule $h={32} $ml={20} />
            <BridgeBtn>Br</BridgeBtn>
            <svg width="42" height="20"><rect width="28" height="20" fill="#d6d6d6" /><path d="M15 0v20M15 10h13" stroke="#333" strokeWidth="2.500" /><rect x="2" y="3" width="12" height="15" fill="#b5b5b5" /><path d="M31 6h10l-5 9z" fill="#d0d0d0" /></svg>
            <Workspace>
              <Rule $h={32} $ml={0} />
              <Fit w={161}>Aspectos esenciales</Fit>
              <Tri $s={7} $c="#c8c8c8" />
            </Workspace>
            <WinButtons>
              <WinButton $w={42}><svg width="16" height="16"><rect y="11" width="16" height="5" fill="#e8e8e8" /></svg></WinButton>
              <WinButton $w={42}><svg width="17" height="16"><rect x="2" y="4" width="12" height="9" fill="none" stroke="#e8e8e8" strokeWidth="3.500" /></svg></WinButton>
              <WinButton $w={70}><svg width="17" height="17" stroke="#e8e8e8" strokeWidth="4"><path d="M2 3l13 12M15 3L2 15" /></svg></WinButton>
            </WinButtons>
          </MenuBar>
          <Frame>
            <ControlBar>
              <Slot $ml={6} $w={4}><BarGrip /></Slot>
              <Slot $ml={10} $w={37}><Fit w={37}>Texto</Fit></Slot>
              <Rule $h={38} $ml={154} />
              <Slot $ml={8} $w={52}><ColorWell>
                <svg width="25" height="25"><rect width="25" height="25" fill="#fff" /><rect x="1.500" y="1.500" width="22" height="22" fill="#000" /></svg>
                <ComboArrow><Tri /></ComboArrow>
              </ColorWell></Slot>
              <Slot $ml={11} $w={52}><ColorWell>
                <svg width="25" height="25"><rect width="25" height="25" fill="#fff" /><rect x="8" y="8" width="9" height="9" fill="none" stroke="#222" strokeWidth="1.800" /><path d="M2 23L23 2" stroke="#f00" strokeWidth="2.800" /></svg>
                <ComboArrow><Tri /></ComboArrow>
              </ColorWell></Slot>
              <Slot $ml={20} $w={42}><LinkLabel><Fit w={42}>Trazo:</Fit></LinkLabel></Slot>
              <Slot $ml={11} $w={119}><Combo w={119} step /></Slot>
              <Slot $ml={11} $w={165}><Combo w={165} off /></Slot>
              <Slot $ml={11} $w={71}><LinkLabel><Fit w={71}>Opacidad:</Fit></LinkLabel></Slot>
              <Slot $ml={10} $w={105}><Combo w={105} value="100%" tw={38} /></Slot>
              <Rule $h={38} $ml={10} />
              <Slot $ml={15} $w={26}>
                <svg width="26" height="24"><circle cx="13" cy="12" r="11" fill="#b4b4b4" /><path d="M13 1a11 11 0 0111 11l-7 1-4-4z" fill="#8a8a8a" /><path d="M2 12l7 1 4 4v6A11 11 0 012 12z" fill="#777" /><path d="M9 9h8v8H9z" fill="#3a3a3a" /><path d="M13 9h4v4h-4zM9 13h4v4H9z" fill="#999" /></svg>
              </Slot>
              <Rule $h={38} $ml={17} />
              <Slot $ml={9} $w={63}><LinkLabel><Fit w={63}>Carácter:</Fit></LinkLabel></Slot>
              <Slot $ml={9} $w={230}><Combo w={230} value="Arial" tw={30} /></Slot>
              <Slot $ml={11} $w={123}>
                <Combo w={123} value="Bold" tw={29} dark>
                  <DropMenu>
                    {STYLES.map(([t, w]) => (
                      <DropItem key={t} $on={t === "Bold"}>
                        {t === "Bold" && <svg width="15" height="13"><path d="M1 5l5 5L14 1" stroke="#fff3d0" strokeWidth="3.500" fill="none" /></svg>}
                        <Fit w={w}>{t}</Fit>
                      </DropItem>
                    ))}
                  </DropMenu>
                </Combo>
              </Slot>
              <Slot $ml={11} $w={119}><Combo w={119} step value="18 pt" tw={35} pad={5} /></Slot>
              <Slot $ml={12} $w={55}><LinkLabel><Fit w={55}>Párrafo:</Fit></LinkLabel></Slot>
              <Slot $ml={11} $w={117}>
                <ParaGroup>
                  <ParaButton $on><ParaLines at={0} /></ParaButton>
                  <ParaButton><ParaLines at={0.5} /></ParaButton>
                  <ParaButton><ParaLines at={1} /></ParaButton>
                </ParaGroup>
              </Slot>
              <Rule $h={38} $ml={11} />
              <Slot $ml={17} $w={38}>
                <svg width="38" height="26" fill="none" stroke="#c4c4c4" strokeWidth="1.600"><rect x="4" y="4" width="18" height="18" strokeDasharray="5 2" /><path d="M4 0v3M22 0v3M4 23v3M22 23v3M0 4h3M0 22h3M23 4h3M23 22h3M13 7v3M13 16v3M7 13h3M16 13h3" /><path d="M27 9h10l-5 8z" fill="#c4c4c4" stroke="none" /></svg>
              </Slot>
              {ALIGNS.map(([kind, pos, ml]) => <Slot key={kind + pos} $ml={ml} $w={27}><AlignGlyph kind={kind} pos={pos} /></Slot>)}
              <Rule $h={38} $ml={13} />
              <Slot $ml={10} $w={85}><LinkLabel><Fit w={85}>Transformar</Fit></LinkLabel></Slot>
              <Slot $ml={454} $w={22}>
                <svg width="22" height="14"><path d="M0 4h8l-4 5z" fill="#c8c8c8" /><path d="M10 0v14M12 2h10M12 7h10M12 12h10" stroke="#c8c8c8" strokeWidth="1.600" /></svg>
              </Slot>
            </ControlBar>
            <Main>
              <DocColumn>
                <TabBar>
                  <DocTab $w={509} $on>
                    <Fit w={456}>plantilla_mapas y gráficos.ai* al 100% (RGB/Previsualizar)</Fit>
                    <svg width="10" height="10" stroke="#ddd" strokeWidth="2"><path d="M1 1l8 8M9 1L1 9" /></svg>
                  </DocTab>
                  <DocTab $w={485}>
                    <Fit w={431}>illustrator_snapshots.ai* al 66.67% (RGB/Previsualizar)</Fit>
                    <svg width="10" height="10" stroke="#ddd" strokeWidth="2"><path d="M1 1l8 8M9 1L1 9" /></svg>
                  </DocTab>
                </TabBar>
                <Middle>
                  <Canvas>
                    <Artboard $x={-2} $w={926} />
                    <DistrictMap />
                    <Artboard $x={958} $w={1293}>
                      <Legend>
                        <GroupTag><Fit w={105}>Grupo 1</Fit></GroupTag>
                        <Outlined $h={228} $mt={35} $pt={15}>Relación entre<br />género y edad<br />de los<br />partipantes de<br />Summer<br />School Ceu<br />2018</Outlined>
                        <Outlined $h={143} $mt={14} $pt={26}>
                          <KeyRow><KeyChip $c="#20b475" /><span>tipo 1</span></KeyRow>
                          <KeyRow><KeyChip $c="#fbb040" /><span>tipo 2</span></KeyRow>
                        </Outlined>
                      </Legend>
                      <Sankey />
                    </Artboard>
                    <ToolsPalette />
                  </Canvas>
                  <VScroll><Tri $dir="up" $s={11} /><VThumb /><Tri $s={11} /></VScroll>
                </Middle>
                <StatusBar>
                  <StatusField $w={65} $ml={6}><Fit w={37}>100%</Fit></StatusField>
                  <StatusCell $w={25} $bg="#555"><Tri /></StatusCell>
                  <StatusCell $w={37}><svg width="14" height="12" fill="#c8c8c8"><path d="M0 0h2.500v12H0zM13 0v12L4 6z" /></svg></StatusCell>
                  <StatusCell $w={28}><Tri $dir="left" /></StatusCell>
                  <StatusField $w={64}>2</StatusField>
                  <StatusCell $w={24} $bg="#555"><Tri /></StatusCell>
                  <StatusCell $w={37}><Tri $dir="right" $c="#777" /></StatusCell>
                  <StatusCell $w={28}><svg width="14" height="12" fill="#777"><path d="M11 0h2.500v12H11zM0 0v12L9 6z" /></svg></StatusCell>
                  <StatusCell $w={306}><Fit w={62}>Selección</Fit></StatusCell>
                  <StatusCell $w={30} $bg="#505050"><Tri $dir="right" $s={9} /></StatusCell>
                  <HTrack><Tri $dir="left" $s={10} /><HThumb /><Tri $dir="right" $s={11} /></HTrack>
                  <Corner />
                </StatusBar>
              </DocColumn>
              <RightDock />
            </Main>
          </Frame>
        </AppWindow>
        <TaskbarView />
      </Desktop>
    </Page>
  );
}
